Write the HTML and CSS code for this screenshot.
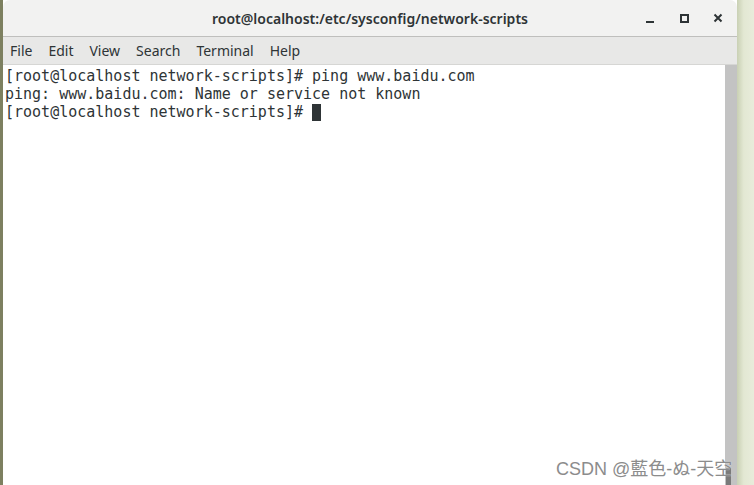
FILE: index.html
```html
<!DOCTYPE html>
<html>
  <head>
    <meta charset="UTF-8" />
    <link rel="stylesheet" href="styles.css">
  </head>
  <body>
    <div id="desktop">
      <div class="edge left"></div>
      <div id="window">
        <div id="titlebar">
          <span class="title">root@localhost:/etc/sysconfig/network-scripts</span>
          <div class="controls">
            <span class="ctl min"></span>
            <span class="ctl max"></span>
            <span class="ctl close">
              <svg width="10" height="10" viewBox="0 0 10 10">
                <path d="M1.5 1.5 L8.5 8.5 M8.5 1.5 L1.5 8.5" stroke="#2e3436" stroke-width="2" fill="none" />
              </svg>
            </span>
          </div>
        </div>
        <div id="menubar">
          <span class="menu">File</span>
          <span class="menu">Edit</span>
          <span class="menu">View</span>
          <span class="menu">Search</span>
          <span class="menu">Terminal</span>
          <span class="menu">Help</span>
        </div>
        <div id="body">
          <div id="terminal">
            <div class="line">[root@localhost network-scripts]# ping www.baidu.com</div>
            <div class="line">ping: www.baidu.com: Name or service not known</div>
            <div class="line">[root@localhost network-scripts]# <span class="cursor"></span></div>
          </div>
          <div id="scrollbar">
            <div class="slider"></div>
          </div>
        </div>
      </div>
      <div class="edge right"></div>
    </div>
    <div id="watermark">CSDN @藍色-ぬ-天空</div>
  </body>
</html>
```

FILE: styles.css
```css
body {
    margin: 0;
    overflow: hidden;
}
#desktop {
    display: flex;
    width: 754px;
    height: 485px;
}
.edge.left {
    width: 3px;
    background: #7d8060;
}
.edge.right {
    flex: 1;
    background: linear-gradient(to right, #c9d0b4, #e3e8d3 40%, #e8ecdb);
}
#window {
    width: 734px;
    display: flex;
    flex-direction: column;
    background: #fff;
    border-radius: 7px 7px 0 0;
    overflow: hidden;
}
#titlebar {
    height: 36px;
    display: flex;
    align-items: center;
    justify-content: center;
    position: relative;
    background: #f2f2f1;
    border-bottom: 1px solid #bfbfbd;
    font-family: "Noto Sans", sans-serif;
}
.title {
    font-size: 14px;
    font-weight: 600;
    color: #2e3436;
}
.controls {
    position: absolute;
    right: 13px;
    top: 0;
    height: 36px;
    display: flex;
    align-items: center;
    gap: 22px;
}
.ctl {
    width: 12px;
    height: 12px;
    display: flex;
    align-items: center;
    justify-content: center;
}
.ctl.min::before {
    content: "";
    width: 8px;
    height: 2px;
    margin-top: 8px;
    background: #2e3436;
}
.ctl.max::before {
    content: "";
    width: 5px;
    height: 5px;
    border: 2px solid #2e3436;
}
#menubar {
    height: 27px;
    display: flex;
    align-items: center;
    gap: 16px;
    padding-left: 7px;
    background: #e8e8e7;
    border-bottom: 1px solid #d6d6d4;
    font-family: "Noto Sans", sans-serif;
    font-size: 14px;
    color: #2e3436;
}
#body {
    flex: 1;
    display: flex;
}
#terminal {
    flex: 1;
    padding: 2px 0 0 2px;
    font-family: "DejaVu Sans Mono", monospace;
    font-size: 15px;
    line-height: 18px;
    color: #2e3436;
}
.line {
    white-space: pre;
    height: 18px;
}
.cursor {
    display: inline-block;
    width: 9px;
    height: 17px;
    vertical-align: -4px;
    background: #2e3436;
}
#scrollbar {
    width: 12px;
    background: #c3c3c3;
    display: flex;
    flex-direction: column;
    justify-content: flex-end;
}
.slider {
    width: 5px;
    height: 17px;
    margin-left: 1px;
    background: #7a7a7a;
}
#watermark {
    position: absolute;
    left: 556px;
    top: 454px;
    font-family: "Liberation Sans", "Noto Sans CJK SC", sans-serif;
    font-size: 18px;
    color: #8c8c8c;
    text-shadow: 0 0 1px #fff;
}
```
